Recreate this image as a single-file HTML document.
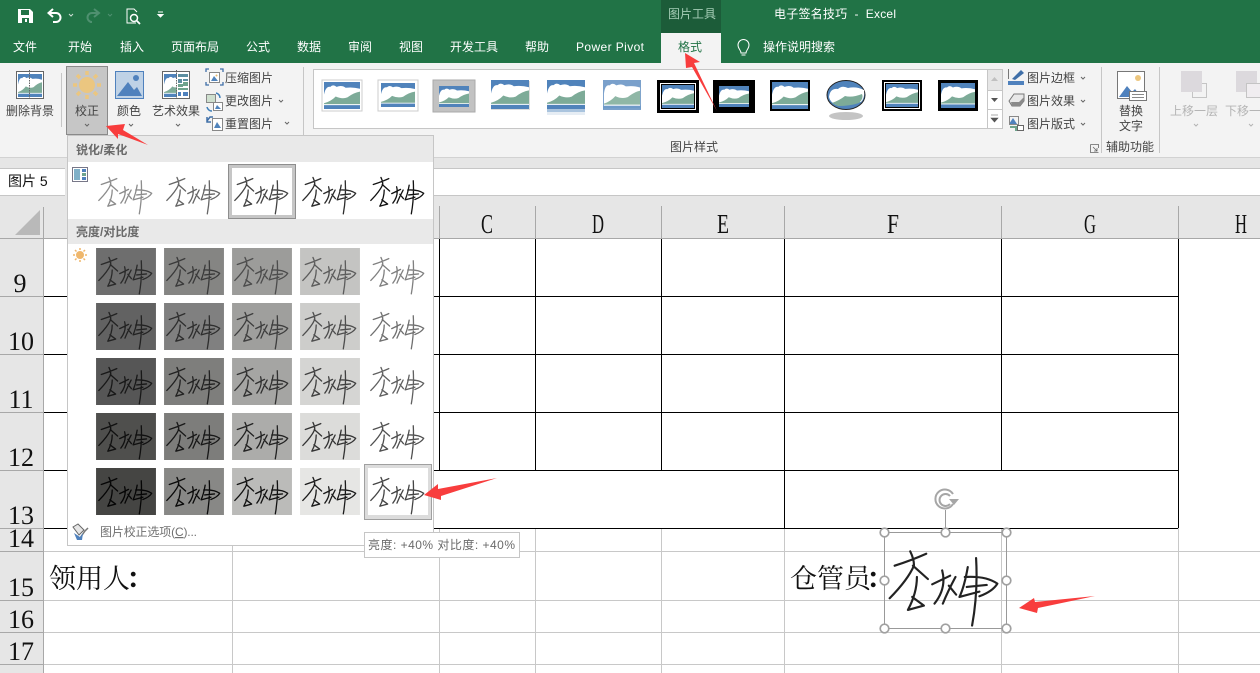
<!DOCTYPE html>
<html lang="zh-CN"><head><meta charset="utf-8"><title>Excel</title>
<style>
html,body{margin:0;padding:0;width:1260px;height:673px;overflow:hidden;background:#fff}
svg{display:block}
text{font-family:"Liberation Sans","Noto Sans CJK SC",sans-serif;font-size:12px;fill:#444;white-space:pre}
.w text{fill:#fff}
.m text{text-anchor:middle}
.n text{font-family:"Liberation Serif",serif;font-size:26px;fill:#111;text-anchor:middle}
.c text{font-family:"Liberation Serif",serif;font-size:27px;fill:#111}
.z{font-family:"Liberation Serif","Noto Serif CJK SC",serif;font-size:27px;fill:#111}
.s path{fill:none;stroke-width:8;stroke-linecap:round;stroke-linejoin:round}
.ch{fill:none;stroke:#666;stroke-width:1}
</style></head><body>
<svg width="1260" height="673" viewBox="0 0 1260 673" xmlns="http://www.w3.org/2000/svg" shape-rendering="geometricPrecision">
<rect width="1260" height="673" fill="#fff"/>

<!-- sheet -->
<rect x="0" y="196" width="1260" height="42" fill="#e6e6e6"/>
<rect x="0" y="196" width="44" height="477" fill="#e6e6e6"/>
<path d="M15 235L40 210V235Z" fill="#b9b9b9"/>
<g fill="#c8c8c8">
<rect x="232" y="528" width="1" height="145"/><rect x="439" y="528" width="1" height="145"/><rect x="535" y="528" width="1" height="145"/><rect x="661" y="528" width="1" height="145"/><rect x="784" y="528" width="1" height="145"/><rect x="1001" y="528" width="1" height="145"/><rect x="1178" y="528" width="1" height="145"/>
<rect x="44" y="551" width="1216" height="1"/><rect x="44" y="600" width="1216" height="1"/><rect x="44" y="632" width="1216" height="1"/><rect x="44" y="664" width="1216" height="1"/>
</g>
<g fill="#a8a8a8">
<rect x="43" y="207" width="1" height="466"/>
<rect x="0" y="238" width="1260" height="1"/>
<rect x="439" y="206" width="1" height="32"/><rect x="535" y="206" width="1" height="32"/><rect x="661" y="206" width="1" height="32"/><rect x="784" y="206" width="1" height="32"/><rect x="1001" y="206" width="1" height="32"/><rect x="1178" y="206" width="1" height="32"/>
<rect x="0" y="296" width="44" height="1"/><rect x="0" y="354" width="44" height="1"/><rect x="0" y="412" width="44" height="1"/><rect x="0" y="470" width="44" height="1"/><rect x="0" y="528" width="44" height="1"/><rect x="0" y="551" width="44" height="1"/><rect x="0" y="600" width="44" height="1"/><rect x="0" y="632" width="44" height="1"/><rect x="0" y="664" width="44" height="1"/>
</g>
<g fill="#000">
<rect x="44" y="296" width="1134" height="1"/><rect x="44" y="354" width="1134" height="1"/><rect x="44" y="412" width="1134" height="1"/><rect x="44" y="470" width="1134" height="1"/><rect x="44" y="528" width="1134" height="1"/>
<rect x="439" y="239" width="1" height="231"/><rect x="535" y="239" width="1" height="231"/><rect x="661" y="239" width="1" height="231"/><rect x="784" y="239" width="1" height="289"/><rect x="1001" y="239" width="1" height="231"/><rect x="1178" y="239" width="1" height="289"/>
</g>
<g class="c">
<text x="481" y="233" textLength="12" lengthAdjust="spacingAndGlyphs">C</text>
<text x="592" y="233" textLength="12" lengthAdjust="spacingAndGlyphs">D</text>
<text x="717" y="233" textLength="12" lengthAdjust="spacingAndGlyphs">E</text>
<text x="887" y="233" textLength="12" lengthAdjust="spacingAndGlyphs">F</text>
<text x="1084" y="233" textLength="12" lengthAdjust="spacingAndGlyphs">G</text>
<text x="1235" y="233" textLength="12" lengthAdjust="spacingAndGlyphs">H</text>
</g>
<g class="n">
<text x="20" y="292">9</text><text x="21" y="350">10</text><text x="21" y="408">11</text><text x="21" y="466">12</text><text x="21" y="524">13</text><text x="21" y="547">14</text><text x="21" y="596">15</text><text x="21" y="628">16</text><text x="21" y="660">17</text>
</g>
<text class="z" x="49" y="588">领用人<tspan dx="-4" style="font-weight:700">：</tspan></text>
<text class="z" x="790" y="588">仓管员<tspan dx="-5" style="font-weight:700">：</tspan></text>

<!-- selected picture -->
<g class="s"><svg x="884" y="532" width="122" height="96" viewBox="313 157 367 288"><path stroke="#222" style="stroke-width:6.500" d="M345 258Q395 242 440 222M392 215Q404 240 403 258Q385 300 330 356M400 258L445 298M412 292Q412 340 385 391L433 378L398 352M458 314L512 288M488 272Q502 325 465 372M528 292Q505 335 490 372M508 318L530 345M590 235Q596 340 578 438M565 262Q555 320 540 352L600 336M556 292Q620 288 654 312Q640 335 600 350M562 322L622 316"/></svg></g>
<rect x="884.500" y="532.500" width="122" height="96" fill="none" stroke="#999"/>
<path d="M945.500 510V532" stroke="#999" fill="none"/>
<g fill="#fff" stroke="#a0a0a0" stroke-width="1.700"><circle cx="884.500" cy="532.500" r="4.300"/><circle cx="945.500" cy="532.500" r="4.300"/><circle cx="1006.500" cy="532.500" r="4.300"/><circle cx="884.500" cy="580.500" r="4.300"/><circle cx="1006.500" cy="580.500" r="4.300"/><circle cx="884.500" cy="628.500" r="4.300"/><circle cx="945.500" cy="628.500" r="4.300"/><circle cx="1006.500" cy="628.500" r="4.300"/></g>
<g fill="none" stroke="#a6a6a6" stroke-width="2"><path d="M953 504A9.500 9.500 0 1 1 953 494"/><path d="M950 504A6 6 0 1 1 950 496"/></g><path d="M949 499H959L954 505Z" fill="#a6a6a6"/>

<!-- formula bar -->
<rect x="0" y="157" width="1260" height="39" fill="#e6e6e6"/>
<rect x="0" y="169" width="1260" height="26" fill="#fff"/>
<rect x="0" y="168" width="1260" height="1" fill="#c6c6c6"/>
<rect x="0" y="195" width="1260" height="1" fill="#c6c6c6"/>
<rect x="65" y="168" width="2" height="28" fill="#e6e6e6"/>
<text x="8" y="186" style="font-size:14px;fill:#111">图片 5</text>

<!-- title + tabs -->
<rect width="1260" height="63" fill="#217346"/>
<rect x="661" y="0" width="60" height="33" fill="#1c5c39"/>
<rect x="661" y="33" width="60" height="30" fill="#f3f3f3"/>
<rect x="0" y="63" width="1260" height="95" fill="#f3f3f3"/>
<rect x="0" y="157" width="1260" height="1" fill="#d2d2d2"/>
<text x="668" y="18" style="fill:#a5cdb6">图片工具</text>
<g class="w">
<text x="774" y="18" textLength="122">电子签名技巧  -  Excel</text>
<text x="13" y="51">文件</text><text x="68" y="51">开始</text><text x="120" y="51">插入</text><text x="171" y="51">页面布局</text><text x="246" y="51">公式</text><text x="297" y="51">数据</text><text x="348" y="51">审阅</text><text x="399" y="51">视图</text><text x="450" y="51">开发工具</text><text x="525" y="51">帮助</text><text x="576" y="51" textLength="68">Power Pivot</text><text x="763" y="51">操作说明搜索</text>
</g>
<text x="678" y="51" style="fill:#217346">格式</text>
<!-- bulb -->
<path d="M741 53C741 50 738 49 738 45A5.500 5.500 0 0 1 749 45C749 49 746 50 746 53ZM741.500 55H745.500" fill="none" stroke="#fff"/>
<!-- QAT -->
<path d="M18 9H30L33 12V23H18Z" fill="#fff"/><rect x="21" y="10" width="8" height="5" fill="#217346"/><rect x="22" y="18" width="7" height="5" fill="#217346"/><rect x="25" y="19" width="2" height="3" fill="#fff"/>
<path d="M49 13H56A4.500 4.500 0 0 1 56 22H53M53 9L48.500 13L53 17" fill="none" stroke="#fff" stroke-width="2"/>
<path d="M69 14L71 16L73 14" fill="none" stroke="#cfe0d6"/>
<path d="M99 13H92A4.500 4.500 0 0 0 92 22H90M94 9L99 13L94 17" fill="none" stroke="#4f9070" stroke-width="2"/>
<path d="M108 14L110 16L112 14" fill="none" stroke="#4f9070"/>
<path d="M136 23H127V9H134L137 12" fill="none" stroke="#fff"/><circle cx="134" cy="18" r="3.500" fill="none" stroke="#fff" stroke-width="1.500"/><path d="M136.500 20.500L140 24" stroke="#fff" stroke-width="1.800"/>
<path d="M158 12H163M158 14.500L160.500 17L163 14.500Z" fill="#fff" stroke="#fff"/>

<!-- ribbon separators -->
<g fill="#c6c6c6"><rect x="61" y="73" width="1" height="54"/><rect x="303" y="67" width="1" height="68"/><rect x="1101" y="67" width="1" height="86"/><rect x="1159" y="67" width="1" height="86"/></g>

<!-- remove background icon -->
<rect x="16.500" y="71.500" width="27" height="27" fill="#fff" stroke="#666"/>
<svg x="18" y="74" width="24" height="23" viewBox="0 0 40 28" preserveAspectRatio="none"><rect width="40" height="28" fill="#5083bb"/><path d="M0 13Q2 4 7 5Q10 2 14 5Q20 3 24 6Q32 5 40 7V28H0Z" fill="#fff"/><path d="M0 22Q8 20 13 15Q20 18 26 16Q33 11 40 10V23H0Z" fill="#7dab98"/><rect y="24" width="40" height="4" fill="#5083bb"/></svg>
<path d="M29.500 70V100" stroke="#666" stroke-dasharray="1.500 1" fill="#fff"/>

<!-- correction button -->
<rect x="66.500" y="66.500" width="41" height="68" fill="#c6c6c6" stroke="#8a8a8a"/>
<circle cx="87" cy="85" r="8" fill="#ebc680"/>
<g stroke="#ebc680" stroke-width="3.500"><path d="M87 71V75M87 95V99M73 85H77M97 85H101M77 75L80 78M94 92L97 95M77 95L80 92M94 78L97 75"/></g>

<!-- colour icon -->
<rect x="115.500" y="71.500" width="28" height="27" fill="#bfd2e6" stroke="#4f81bd"/>
<circle cx="136" cy="78" r="3" fill="#4f81bd"/>
<path d="M117 96L128 82L134 90L137 87L142 96Z" fill="#4f81bd"/>

<!-- artistic -->
<rect x="162.500" y="71.500" width="27" height="27" fill="#fff" stroke="#666"/>
<svg x="164" y="74" width="13" height="23" viewBox="0 0 20 28" preserveAspectRatio="none"><rect width="20" height="28" fill="#5083bb"/><path d="M0 13Q2 4 7 5Q10 2 14 5Q18 3 20 6V28H0Z" fill="#fff"/><path d="M0 22Q8 20 13 15Q16 17 20 16V23H0Z" fill="#7dab98"/><rect y="24" width="20" height="4" fill="#5083bb"/></svg>
<g fill="#5c8ea0"><rect x="178" y="74" width="10" height="3"/><rect x="178" y="79" width="4" height="4"/><rect x="183" y="79" width="5" height="2"/></g>
<g fill="#6ea38c"><rect x="178" y="84" width="5" height="3"/><rect x="183" y="82" width="5" height="4"/><rect x="178" y="88" width="10" height="2"/></g>
<g fill="#4f81bd"><rect x="178" y="92" width="3" height="4"/><rect x="183" y="92" width="5" height="4"/></g>
<path d="M176.500 70V100" stroke="#666" stroke-dasharray="1.500 1"/>

<!-- small icons col 1 -->
<rect x="209.500" y="72.500" width="10" height="10" fill="#fff" stroke="#888"/>
<path d="M211 81L214 76L218 81Z" fill="#5083bb"/><circle cx="216.500" cy="75.500" r="1" fill="#e8b868"/>
<g fill="none" stroke="#3f6fa8" stroke-width="1.300"><path d="M206 72V69H209M220 69H223V72M206 82V85H209M220 85H223V82"/></g>
<rect x="213.500" y="102.500" width="9" height="8" fill="#fff" stroke="#888"/><path d="M215 109L217 105L221 109Z" fill="#5083bb"/>
<rect x="206.500" y="94.500" width="9" height="8" fill="#cfe0cf" stroke="#888"/>
<path d="M207 107A5 5 0 0 0 212 111M216 93A5 5 0 0 1 220 98" fill="none" stroke="#3f7fb8" stroke-width="1.500"/>
<rect x="212.500" y="118.500" width="10" height="12" fill="#fff" stroke="#888"/><path d="M214 128L217 122L221 128Z" fill="#5083bb"/>
<path d="M207 121L210 117L213 117M207 117V122H211" fill="none" stroke="#3f6fa8" stroke-width="1.500"/>

<g>
<text x="225" y="82">压缩图片</text><text x="225" y="105">更改图片</text><text x="225" y="128">重置图片</text>
<text x="1027" y="82">图片边框</text><text x="1027" y="105">图片效果</text><text x="1027" y="128">图片版式</text>
<text x="670" y="151">图片样式</text><text x="1106" y="151">辅助功能</text>
</g>
<g class="m">
<text x="30" y="115">删除背景</text><text x="87" y="115">校正</text><text x="129" y="115">颜色</text><text x="176" y="115">艺术效果</text>
<text x="1131" y="115">替换</text><text x="1131" y="130">文字</text>
<text x="1194" y="115" style="fill:#b4b4b4">上移一层</text><text x="1249" y="115" style="fill:#b4b4b4">下移一层</text>
</g>
<g class="ch">
<path d="M85 124L87 126L89 124M129 124L131 126L133 124M176 124L178 126L180 124M279 100L281 102L283 100M285 122L287 124L289 122M1081 77L1083 79L1085 77M1081 100L1083 102L1085 100M1081 123L1083 125L1085 123"/>
<path d="M1194 124L1196 126L1198 124M1249 124L1251 126L1253 124" stroke="#b4b4b4"/>
</g>

<!-- gallery -->
<rect x="313.500" y="69.500" width="689" height="59" fill="#fff" stroke="#c6c6c6"/>
<rect x="988" y="70" width="14" height="20" fill="#e6e6e6"/>
<g fill="#c6c6c6"><rect x="987" y="70" width="1" height="58"/><rect x="988" y="90" width="14" height="1"/><rect x="988" y="109" width="14" height="1"/></g>
<path d="M991 81L994.500 77L998 81Z" fill="#c0c0c0"/>
<path d="M991 98L994.500 102L998 98Z" fill="#555"/>
<path d="M991 115H998M991 118L994.500 122L998 118Z" fill="#555" stroke="#555" stroke-width=".6"/>

<!-- style 1 -->
<rect x="322" y="80" width="40" height="31" fill="#fff" stroke="#ccc"/>
<svg x="324" y="82" width="36" height="27" viewBox="0 0 40 28" preserveAspectRatio="none"><rect width="40" height="28" fill="#5083bb"/><path d="M0 13Q2 4 7 5Q10 2 14 5Q20 3 24 6Q32 5 40 7V28H0Z" fill="#fff"/><path d="M0 22Q8 20 13 15Q20 18 26 16Q33 11 40 10V23H0Z" fill="#7dab98"/><rect y="24" width="40" height="4" fill="#5083bb"/></svg>
<!-- style 2 -->
<rect x="378" y="80" width="40" height="31" fill="#fff" stroke="#ccc"/>
<svg x="381" y="83" width="34" height="24" viewBox="0 0 40 28" preserveAspectRatio="none"><rect width="40" height="28" fill="#5083bb"/><path d="M0 13Q2 4 7 5Q10 2 14 5Q20 3 24 6Q32 5 40 7V28H0Z" fill="#fff"/><path d="M0 22Q8 20 13 15Q20 18 26 16Q33 11 40 10V23H0Z" fill="#7dab98"/><rect y="24" width="40" height="4" fill="#5083bb"/></svg>
<!-- style 3 -->
<rect x="433" y="80" width="42" height="32" fill="#c2c2c2" stroke="#aaa"/>
<svg x="439" y="86" width="30" height="21" viewBox="0 0 40 28" preserveAspectRatio="none"><rect width="40" height="28" fill="#5083bb"/><path d="M0 13Q2 4 7 5Q10 2 14 5Q20 3 24 6Q32 5 40 7V28H0Z" fill="#fff"/><path d="M0 22Q8 20 13 15Q20 18 26 16Q33 11 40 10V23H0Z" fill="#7dab98"/><rect y="24" width="40" height="4" fill="#5083bb"/></svg>
<!-- style 4 -->
<rect x="491" y="81" width="39" height="29" fill="#ddd"/>
<svg x="491" y="80" width="38" height="29" viewBox="0 0 40 28" preserveAspectRatio="none"><rect width="40" height="28" fill="#5083bb"/><path d="M0 13Q2 4 7 5Q10 2 14 5Q20 3 24 6Q32 5 40 7V28H0Z" fill="#fff"/><path d="M0 22Q8 20 13 15Q20 18 26 16Q33 11 40 10V23H0Z" fill="#7dab98"/><rect y="24" width="40" height="4" fill="#5083bb"/></svg>
<!-- style 5 -->
<svg x="547" y="80" width="38" height="29" viewBox="0 0 40 28" preserveAspectRatio="none"><rect width="40" height="28" fill="#5083bb"/><path d="M0 13Q2 4 7 5Q10 2 14 5Q20 3 24 6Q32 5 40 7V28H0Z" fill="#fff"/><path d="M0 22Q8 20 13 15Q20 18 26 16Q33 11 40 10V23H0Z" fill="#7dab98"/><rect y="24" width="40" height="4" fill="#5083bb"/></svg>
<rect x="547" y="109" width="38" height="3" fill="#aac4de"/><rect x="547" y="112" width="38" height="3" fill="#e6edf4"/>
<!-- style 6 -->
<svg x="603" y="80" width="38" height="30" viewBox="0 0 40 28" preserveAspectRatio="none"><rect width="40" height="28" fill="#7aa0cb"/><path d="M1 13Q2 4 7 5Q10 2 14 5Q20 3 24 6Q32 5 39 7V27H1Z" fill="#fff"/><path d="M1 22Q8 20 13 15Q20 18 26 16Q33 11 39 10V23H1Z" fill="#8fb7a6"/><rect y="24" width="40" height="3" fill="#6e9ac8"/></svg>
<!-- style 7 -->
<rect x="657" y="80" width="42" height="33" fill="#000"/><rect x="660" y="83" width="36" height="27" fill="#fff"/><rect x="661" y="84" width="34" height="25" fill="#000"/>
<svg x="662" y="85" width="32" height="23" viewBox="0 0 40 28" preserveAspectRatio="none"><rect width="40" height="28" fill="#5083bb"/><path d="M0 13Q2 4 7 5Q10 2 14 5Q20 3 24 6Q32 5 40 7V28H0Z" fill="#fff"/><path d="M0 22Q8 20 13 15Q20 18 26 16Q33 11 40 10V23H0Z" fill="#7dab98"/><rect y="24" width="40" height="4" fill="#5083bb"/></svg>
<!-- style 8 -->
<rect x="713" y="80" width="42" height="33" fill="#000"/>
<svg x="719" y="86" width="30" height="21" viewBox="0 0 40 28" preserveAspectRatio="none"><rect width="40" height="28" fill="#5083bb"/><path d="M0 13Q2 4 7 5Q10 2 14 5Q20 3 24 6Q32 5 40 7V28H0Z" fill="#fff"/><path d="M0 22Q8 20 13 15Q20 18 26 16Q33 11 40 10V23H0Z" fill="#7dab98"/><rect y="24" width="40" height="4" fill="#5083bb"/></svg>
<!-- style 9 -->
<rect x="770" y="80" width="40" height="31" fill="#000"/>
<svg x="772" y="82" width="36" height="27" viewBox="0 0 40 28" preserveAspectRatio="none"><rect width="40" height="28" fill="#5083bb"/><path d="M0 13Q2 4 7 5Q10 2 14 5Q20 3 24 6Q32 5 40 7V28H0Z" fill="#fff"/><path d="M0 22Q8 20 13 15Q20 18 26 16Q33 11 40 10V23H0Z" fill="#7dab98"/><rect y="24" width="40" height="4" fill="#5083bb"/></svg>
<!-- style 10 -->
<ellipse cx="846" cy="116" rx="17" ry="4" fill="#c4c4c4"/>
<ellipse cx="846" cy="95" rx="19" ry="14.500" fill="#5083bb" stroke="#222"/>
<path d="M829 97Q830 88 838 89Q842 85 848 88Q856 86 864 90Q865 98 861 102L836 105Q830 102 829 97Z" fill="#fff"/>
<path d="M832 103Q840 100 845 96Q852 98 862 94Q864 98 859 103Q850 106 838 106Z" fill="#7dab98"/>
<!-- style 11 -->
<rect x="882" y="80" width="40" height="31" fill="#000"/><rect x="884" y="82" width="36" height="27" fill="#fff"/><rect x="885" y="83" width="34" height="25" fill="#000"/>
<svg x="886" y="84" width="32" height="23" viewBox="0 0 40 28" preserveAspectRatio="none"><rect width="40" height="28" fill="#5083bb"/><path d="M0 13Q2 4 7 5Q10 2 14 5Q20 3 24 6Q32 5 40 7V28H0Z" fill="#fff"/><path d="M0 22Q8 20 13 15Q20 18 26 16Q33 11 40 10V23H0Z" fill="#7dab98"/><rect y="24" width="40" height="4" fill="#5083bb"/></svg>
<!-- style 12 -->
<rect x="938" y="80" width="40" height="31" fill="#000"/>
<svg x="941" y="83" width="34" height="25" viewBox="0 0 40 28" preserveAspectRatio="none"><rect width="40" height="28" fill="#5083bb"/><path d="M0 13Q2 4 7 5Q10 2 14 5Q20 3 24 6Q32 5 40 7V28H0Z" fill="#fff"/><path d="M0 22Q8 20 13 15Q20 18 26 16Q33 11 40 10V23H0Z" fill="#7dab98"/><rect y="24" width="40" height="4" fill="#5083bb"/></svg>

<!-- right small icons -->
<rect x="1008" y="81" width="16" height="4" fill="#4f81bd"/>
<path d="M1012 79L1021 70L1024 73L1015 80Z" fill="#3f6fa8"/><path d="M1008.500 69V79" stroke="#777"/>
<path d="M1009 101L1014 94H1024V101L1020 106H1012Z" fill="#e8e8e8" stroke="#777"/><path d="M1012 106L1020 106L1024 101V97L1019 102H1011Z" fill="#8a8a8a"/>
<path d="M1009 124L1013 118L1017 124Z" fill="#4f81bd"/><rect x="1009.500" y="116.500" width="9" height="8" fill="none" stroke="#888"/><path d="M1010 127H1016V131" fill="none" stroke="#6ea38c" stroke-width="2"/><rect x="1017.500" y="125.500" width="6" height="5" fill="#fff" stroke="#666"/>
<path d="M1090.500 144.500V152.500H1098.500M1090.500 144.500H1098.500V148M1093 147L1097 151M1097 148V151H1094" fill="none" stroke="#666" stroke-width=".8"/>

<!-- alt text icon -->
<rect x="1117.500" y="71.500" width="27" height="27" fill="#fff" stroke="#777"/>
<circle cx="1138" cy="78" r="3" fill="#ecc67e"/>
<path d="M1119 97L1127 86L1132 92L1135 89L1141 97Z" fill="#4f81bd"/>
<rect x="1129.500" y="91.500" width="17" height="9" fill="#fff" stroke="#777"/>
<path d="M1132 94.500H1144M1132 97.500H1144" stroke="#888"/>

<!-- layer icons -->
<rect x="1192.500" y="83.500" width="14" height="14" fill="#f3f3f3" stroke="#c4c4c4"/>
<rect x="1181" y="71" width="21" height="21" fill="#dcd9dd"/>
<rect x="1236" y="71" width="21" height="21" fill="#dcd9dd"/>
<rect x="1246.500" y="83.500" width="14" height="14" fill="#f0edf0" stroke="#c4c4c4"/>

<!-- dropdown panel -->
<rect x="67.500" y="135.500" width="366" height="410" fill="#fff" stroke="#c6c6c6"/>
<rect x="68" y="136" width="365" height="26" fill="#e9e9e9"/>
<rect x="68" y="219" width="365" height="25" fill="#e9e9e9"/>
<text x="76" y="154" style="font-weight:700;fill:#6a6a6a">锐化/柔化</text>
<text x="76" y="236" style="font-weight:700;fill:#6a6a6a">亮度/对比度</text>
<rect x="72.500" y="167.500" width="15" height="14" fill="#fff" stroke="#778"/>
<rect x="74" y="169" width="6" height="11" fill="#7fb0c8"/><rect x="82" y="169" width="4" height="3" fill="#4f81bd"/><rect x="82" y="173" width="4" height="3" fill="#6ea38c"/><rect x="82" y="177" width="4" height="3" fill="#4f81bd"/>
<circle cx="80" cy="255" r="4" fill="#efb76c"/>
<path d="M80 248V250M80 260V262M73 255H75M85 255H87M75 250L76.500 251.500M83.500 258.500L85 260M75 260L76.500 258.500M83.500 251.500L85 250" stroke="#efb76c" stroke-width="1.500"/>

<rect x="228.500" y="164.500" width="67" height="54" fill="#c6c6c6" stroke="#8e8e8e"/>
<rect x="232" y="168" width="60" height="47" fill="#fff"/>
<rect x="364.500" y="464.500" width="67" height="55" fill="#dcdcdc" stroke="#a0a0a0"/>
<rect x="368" y="468" width="60" height="47" fill="#fff"/>

<g class="s" style="filter:blur(.3px)">
<svg x="96" y="168" width="60" height="47" viewBox="313 157 367 288"><path stroke="#8c8c8c" d="M345 258Q395 242 440 222M392 215Q404 240 403 258Q385 300 330 356M400 258L445 298M412 292Q412 340 385 391L433 378L398 352M458 314L512 288M488 272Q502 325 465 372M528 292Q505 335 490 372M508 318L530 345M590 235Q596 340 578 438M565 262Q555 320 540 352L600 336M556 292Q620 288 654 312Q640 335 600 350M562 322L622 316"/></svg>
<svg x="164" y="168" width="60" height="47" viewBox="313 157 367 288"><path stroke="#666" d="M345 258Q395 242 440 222M392 215Q404 240 403 258Q385 300 330 356M400 258L445 298M412 292Q412 340 385 391L433 378L398 352M458 314L512 288M488 272Q502 325 465 372M528 292Q505 335 490 372M508 318L530 345M590 235Q596 340 578 438M565 262Q555 320 540 352L600 336M556 292Q620 288 654 312Q640 335 600 350M562 322L622 316"/></svg>
<svg x="232" y="168" width="60" height="47" viewBox="313 157 367 288"><path stroke="#444" d="M345 258Q395 242 440 222M392 215Q404 240 403 258Q385 300 330 356M400 258L445 298M412 292Q412 340 385 391L433 378L398 352M458 314L512 288M488 272Q502 325 465 372M528 292Q505 335 490 372M508 318L530 345M590 235Q596 340 578 438M565 262Q555 320 540 352L600 336M556 292Q620 288 654 312Q640 335 600 350M562 322L622 316"/></svg>
<svg x="300" y="168" width="60" height="47" viewBox="313 157 367 288"><path stroke="#2c2c2c" d="M345 258Q395 242 440 222M392 215Q404 240 403 258Q385 300 330 356M400 258L445 298M412 292Q412 340 385 391L433 378L398 352M458 314L512 288M488 272Q502 325 465 372M528 292Q505 335 490 372M508 318L530 345M590 235Q596 340 578 438M565 262Q555 320 540 352L600 336M556 292Q620 288 654 312Q640 335 600 350M562 322L622 316"/></svg>
<svg x="368" y="168" width="60" height="47" viewBox="313 157 367 288"><path stroke="#111" d="M345 258Q395 242 440 222M392 215Q404 240 403 258Q385 300 330 356M400 258L445 298M412 292Q412 340 385 391L433 378L398 352M458 314L512 288M488 272Q502 325 465 372M528 292Q505 335 490 372M508 318L530 345M590 235Q596 340 578 438M565 262Q555 320 540 352L600 336M556 292Q620 288 654 312Q640 335 600 350M562 322L622 316"/></svg>

<svg x="96" y="248" width="60" height="47" viewBox="313 157 367 288"><rect x="313" y="157" width="367" height="288" fill="#6e6e6e"/><path stroke="#2a2a2a" d="M345 258Q395 242 440 222M392 215Q404 240 403 258Q385 300 330 356M400 258L445 298M412 292Q412 340 385 391L433 378L398 352M458 314L512 288M488 272Q502 325 465 372M528 292Q505 335 490 372M508 318L530 345M590 235Q596 340 578 438M565 262Q555 320 540 352L600 336M556 292Q620 288 654 312Q640 335 600 350M562 322L622 316"/></svg>
<svg x="164" y="248" width="60" height="47" viewBox="313 157 367 288"><rect x="313" y="157" width="367" height="288" fill="#858583"/><path stroke="#3a3a3a" d="M345 258Q395 242 440 222M392 215Q404 240 403 258Q385 300 330 356M400 258L445 298M412 292Q412 340 385 391L433 378L398 352M458 314L512 288M488 272Q502 325 465 372M528 292Q505 335 490 372M508 318L530 345M590 235Q596 340 578 438M565 262Q555 320 540 352L600 336M556 292Q620 288 654 312Q640 335 600 350M562 322L622 316"/></svg>
<svg x="232" y="248" width="60" height="47" viewBox="313 157 367 288"><rect x="313" y="157" width="367" height="288" fill="#9c9c9a"/><path stroke="#4c4c4c" d="M345 258Q395 242 440 222M392 215Q404 240 403 258Q385 300 330 356M400 258L445 298M412 292Q412 340 385 391L433 378L398 352M458 314L512 288M488 272Q502 325 465 372M528 292Q505 335 490 372M508 318L530 345M590 235Q596 340 578 438M565 262Q555 320 540 352L600 336M556 292Q620 288 654 312Q640 335 600 350M562 322L622 316"/></svg>
<svg x="300" y="248" width="60" height="47" viewBox="313 157 367 288"><rect x="313" y="157" width="367" height="288" fill="#c4c4c2"/><path stroke="#5c5c5c" d="M345 258Q395 242 440 222M392 215Q404 240 403 258Q385 300 330 356M400 258L445 298M412 292Q412 340 385 391L433 378L398 352M458 314L512 288M488 272Q502 325 465 372M528 292Q505 335 490 372M508 318L530 345M590 235Q596 340 578 438M565 262Q555 320 540 352L600 336M556 292Q620 288 654 312Q640 335 600 350M562 322L622 316"/></svg>
<svg x="368" y="248" width="60" height="47" viewBox="313 157 367 288"><path stroke="#808080" d="M345 258Q395 242 440 222M392 215Q404 240 403 258Q385 300 330 356M400 258L445 298M412 292Q412 340 385 391L433 378L398 352M458 314L512 288M488 272Q502 325 465 372M528 292Q505 335 490 372M508 318L530 345M590 235Q596 340 578 438M565 262Q555 320 540 352L600 336M556 292Q620 288 654 312Q640 335 600 350M562 322L622 316"/></svg>

<svg x="96" y="303" width="60" height="47" viewBox="313 157 367 288"><rect x="313" y="157" width="367" height="288" fill="#626262"/><path stroke="#222" d="M345 258Q395 242 440 222M392 215Q404 240 403 258Q385 300 330 356M400 258L445 298M412 292Q412 340 385 391L433 378L398 352M458 314L512 288M488 272Q502 325 465 372M528 292Q505 335 490 372M508 318L530 345M590 235Q596 340 578 438M565 262Q555 320 540 352L600 336M556 292Q620 288 654 312Q640 335 600 350M562 322L622 316"/></svg>
<svg x="164" y="303" width="60" height="47" viewBox="313 157 367 288"><rect x="313" y="157" width="367" height="288" fill="#808080"/><path stroke="#2e2e2e" d="M345 258Q395 242 440 222M392 215Q404 240 403 258Q385 300 330 356M400 258L445 298M412 292Q412 340 385 391L433 378L398 352M458 314L512 288M488 272Q502 325 465 372M528 292Q505 335 490 372M508 318L530 345M590 235Q596 340 578 438M565 262Q555 320 540 352L600 336M556 292Q620 288 654 312Q640 335 600 350M562 322L622 316"/></svg>
<svg x="232" y="303" width="60" height="47" viewBox="313 157 367 288"><rect x="313" y="157" width="367" height="288" fill="#9f9f9d"/><path stroke="#3e3e3e" d="M345 258Q395 242 440 222M392 215Q404 240 403 258Q385 300 330 356M400 258L445 298M412 292Q412 340 385 391L433 378L398 352M458 314L512 288M488 272Q502 325 465 372M528 292Q505 335 490 372M508 318L530 345M590 235Q596 340 578 438M565 262Q555 320 540 352L600 336M556 292Q620 288 654 312Q640 335 600 350M562 322L622 316"/></svg>
<svg x="300" y="303" width="60" height="47" viewBox="313 157 367 288"><rect x="313" y="157" width="367" height="288" fill="#cdcdcb"/><path stroke="#4e4e4e" d="M345 258Q395 242 440 222M392 215Q404 240 403 258Q385 300 330 356M400 258L445 298M412 292Q412 340 385 391L433 378L398 352M458 314L512 288M488 272Q502 325 465 372M528 292Q505 335 490 372M508 318L530 345M590 235Q596 340 578 438M565 262Q555 320 540 352L600 336M556 292Q620 288 654 312Q640 335 600 350M562 322L622 316"/></svg>
<svg x="368" y="303" width="60" height="47" viewBox="313 157 367 288"><path stroke="#707070" d="M345 258Q395 242 440 222M392 215Q404 240 403 258Q385 300 330 356M400 258L445 298M412 292Q412 340 385 391L433 378L398 352M458 314L512 288M488 272Q502 325 465 372M528 292Q505 335 490 372M508 318L530 345M590 235Q596 340 578 438M565 262Q555 320 540 352L600 336M556 292Q620 288 654 312Q640 335 600 350M562 322L622 316"/></svg>

<svg x="96" y="358" width="60" height="47" viewBox="313 157 367 288"><rect x="313" y="157" width="367" height="288" fill="#565656"/><path stroke="#181818" d="M345 258Q395 242 440 222M392 215Q404 240 403 258Q385 300 330 356M400 258L445 298M412 292Q412 340 385 391L433 378L398 352M458 314L512 288M488 272Q502 325 465 372M528 292Q505 335 490 372M508 318L530 345M590 235Q596 340 578 438M565 262Q555 320 540 352L600 336M556 292Q620 288 654 312Q640 335 600 350M562 322L622 316"/></svg>
<svg x="164" y="358" width="60" height="47" viewBox="313 157 367 288"><rect x="313" y="157" width="367" height="288" fill="#7e7e7c"/><path stroke="#222" d="M345 258Q395 242 440 222M392 215Q404 240 403 258Q385 300 330 356M400 258L445 298M412 292Q412 340 385 391L433 378L398 352M458 314L512 288M488 272Q502 325 465 372M528 292Q505 335 490 372M508 318L530 345M590 235Q596 340 578 438M565 262Q555 320 540 352L600 336M556 292Q620 288 654 312Q640 335 600 350M562 322L622 316"/></svg>
<svg x="232" y="358" width="60" height="47" viewBox="313 157 367 288"><rect x="313" y="157" width="367" height="288" fill="#a5a5a3"/><path stroke="#303030" d="M345 258Q395 242 440 222M392 215Q404 240 403 258Q385 300 330 356M400 258L445 298M412 292Q412 340 385 391L433 378L398 352M458 314L512 288M488 272Q502 325 465 372M528 292Q505 335 490 372M508 318L530 345M590 235Q596 340 578 438M565 262Q555 320 540 352L600 336M556 292Q620 288 654 312Q640 335 600 350M562 322L622 316"/></svg>
<svg x="300" y="358" width="60" height="47" viewBox="313 157 367 288"><rect x="313" y="157" width="367" height="288" fill="#d5d5d3"/><path stroke="#404040" d="M345 258Q395 242 440 222M392 215Q404 240 403 258Q385 300 330 356M400 258L445 298M412 292Q412 340 385 391L433 378L398 352M458 314L512 288M488 272Q502 325 465 372M528 292Q505 335 490 372M508 318L530 345M590 235Q596 340 578 438M565 262Q555 320 540 352L600 336M556 292Q620 288 654 312Q640 335 600 350M562 322L622 316"/></svg>
<svg x="368" y="358" width="60" height="47" viewBox="313 157 367 288"><path stroke="#606060" d="M345 258Q395 242 440 222M392 215Q404 240 403 258Q385 300 330 356M400 258L445 298M412 292Q412 340 385 391L433 378L398 352M458 314L512 288M488 272Q502 325 465 372M528 292Q505 335 490 372M508 318L530 345M590 235Q596 340 578 438M565 262Q555 320 540 352L600 336M556 292Q620 288 654 312Q640 335 600 350M562 322L622 316"/></svg>

<svg x="96" y="413" width="60" height="47" viewBox="313 157 367 288"><rect x="313" y="157" width="367" height="288" fill="#4f4f4d"/><path stroke="#101010" d="M345 258Q395 242 440 222M392 215Q404 240 403 258Q385 300 330 356M400 258L445 298M412 292Q412 340 385 391L433 378L398 352M458 314L512 288M488 272Q502 325 465 372M528 292Q505 335 490 372M508 318L530 345M590 235Q596 340 578 438M565 262Q555 320 540 352L600 336M556 292Q620 288 654 312Q640 335 600 350M562 322L622 316"/></svg>
<svg x="164" y="413" width="60" height="47" viewBox="313 157 367 288"><rect x="313" y="157" width="367" height="288" fill="#7d7d7b"/><path stroke="#181818" d="M345 258Q395 242 440 222M392 215Q404 240 403 258Q385 300 330 356M400 258L445 298M412 292Q412 340 385 391L433 378L398 352M458 314L512 288M488 272Q502 325 465 372M528 292Q505 335 490 372M508 318L530 345M590 235Q596 340 578 438M565 262Q555 320 540 352L600 336M556 292Q620 288 654 312Q640 335 600 350M562 322L622 316"/></svg>
<svg x="232" y="413" width="60" height="47" viewBox="313 157 367 288"><rect x="313" y="157" width="367" height="288" fill="#acacaa"/><path stroke="#222" d="M345 258Q395 242 440 222M392 215Q404 240 403 258Q385 300 330 356M400 258L445 298M412 292Q412 340 385 391L433 378L398 352M458 314L512 288M488 272Q502 325 465 372M528 292Q505 335 490 372M508 318L530 345M590 235Q596 340 578 438M565 262Q555 320 540 352L600 336M556 292Q620 288 654 312Q640 335 600 350M562 322L622 316"/></svg>
<svg x="300" y="413" width="60" height="47" viewBox="313 157 367 288"><rect x="313" y="157" width="367" height="288" fill="#dcdcda"/><path stroke="#333" d="M345 258Q395 242 440 222M392 215Q404 240 403 258Q385 300 330 356M400 258L445 298M412 292Q412 340 385 391L433 378L398 352M458 314L512 288M488 272Q502 325 465 372M528 292Q505 335 490 372M508 318L530 345M590 235Q596 340 578 438M565 262Q555 320 540 352L600 336M556 292Q620 288 654 312Q640 335 600 350M562 322L622 316"/></svg>
<svg x="368" y="413" width="60" height="47" viewBox="313 157 367 288"><path stroke="#505050" d="M345 258Q395 242 440 222M392 215Q404 240 403 258Q385 300 330 356M400 258L445 298M412 292Q412 340 385 391L433 378L398 352M458 314L512 288M488 272Q502 325 465 372M528 292Q505 335 490 372M508 318L530 345M590 235Q596 340 578 438M565 262Q555 320 540 352L600 336M556 292Q620 288 654 312Q640 335 600 350M562 322L622 316"/></svg>

<svg x="96" y="468" width="60" height="47" viewBox="313 157 367 288"><rect x="313" y="157" width="367" height="288" fill="#454543"/><path stroke="#050505" d="M345 258Q395 242 440 222M392 215Q404 240 403 258Q385 300 330 356M400 258L445 298M412 292Q412 340 385 391L433 378L398 352M458 314L512 288M488 272Q502 325 465 372M528 292Q505 335 490 372M508 318L530 345M590 235Q596 340 578 438M565 262Q555 320 540 352L600 336M556 292Q620 288 654 312Q640 335 600 350M562 322L622 316"/></svg>
<svg x="164" y="468" width="60" height="47" viewBox="313 157 367 288"><rect x="313" y="157" width="367" height="288" fill="#888886"/><path stroke="#0a0a0a" d="M345 258Q395 242 440 222M392 215Q404 240 403 258Q385 300 330 356M400 258L445 298M412 292Q412 340 385 391L433 378L398 352M458 314L512 288M488 272Q502 325 465 372M528 292Q505 335 490 372M508 318L530 345M590 235Q596 340 578 438M565 262Q555 320 540 352L600 336M556 292Q620 288 654 312Q640 335 600 350M562 322L622 316"/></svg>
<svg x="232" y="468" width="60" height="47" viewBox="313 157 367 288"><rect x="313" y="157" width="367" height="288" fill="#bbbbb9"/><path stroke="#111" d="M345 258Q395 242 440 222M392 215Q404 240 403 258Q385 300 330 356M400 258L445 298M412 292Q412 340 385 391L433 378L398 352M458 314L512 288M488 272Q502 325 465 372M528 292Q505 335 490 372M508 318L530 345M590 235Q596 340 578 438M565 262Q555 320 540 352L600 336M556 292Q620 288 654 312Q640 335 600 350M562 322L622 316"/></svg>
<svg x="300" y="468" width="60" height="47" viewBox="313 157 367 288"><rect x="313" y="157" width="367" height="288" fill="#e6e6e4"/><path stroke="#1a1a1a" d="M345 258Q395 242 440 222M392 215Q404 240 403 258Q385 300 330 356M400 258L445 298M412 292Q412 340 385 391L433 378L398 352M458 314L512 288M488 272Q502 325 465 372M528 292Q505 335 490 372M508 318L530 345M590 235Q596 340 578 438M565 262Q555 320 540 352L600 336M556 292Q620 288 654 312Q640 335 600 350M562 322L622 316"/></svg>
<svg x="368" y="468" width="60" height="47" viewBox="313 157 367 288"><path stroke="#444" d="M345 258Q395 242 440 222M392 215Q404 240 403 258Q385 300 330 356M400 258L445 298M412 292Q412 340 385 391L433 378L398 352M458 314L512 288M488 272Q502 325 465 372M528 292Q505 335 490 372M508 318L530 345M590 235Q596 340 578 438M565 262Q555 320 540 352L600 336M556 292Q620 288 654 312Q640 335 600 350M562 322L622 316"/></svg>
</g>

<path d="M73 527L78 524L84 530L79 535Z" fill="#e6e6e6" stroke="#666"/>
<path d="M80 538L85 531L88 528" fill="none" stroke="#777" stroke-width="1.500"/>
<path d="M74 533L80 537L83 533L82 540L77 540Z" fill="#4f81bd"/>
<text x="100" y="536" textLength="97" style="fill:#707070">图片校正选项(<tspan text-decoration="underline">C</tspan>)...</text>

<!-- tooltip -->
<rect x="364.500" y="532.500" width="155" height="25" fill="#fff" stroke="#c6c6c6"/>
<text x="368" y="549" textLength="147" style="fill:#6a6a6a">亮度: +40% 对比度: +40%</text>

<!-- red arrows -->
<g fill="#f83d3d">
<path d="M106 126L125 124L123 130L148 145L118 134L118 139Z"/>
<path d="M685 53L700 62L694 63L717 111L692 67L686 68Z"/>
<path d="M424 495L438 484L438 489L497 478L441 496L441 500Z"/>
<path d="M1019 608L1034 598L1035 602L1095 596L1038 608L1037 613Z"/>
</g>
</svg>
</body></html>
